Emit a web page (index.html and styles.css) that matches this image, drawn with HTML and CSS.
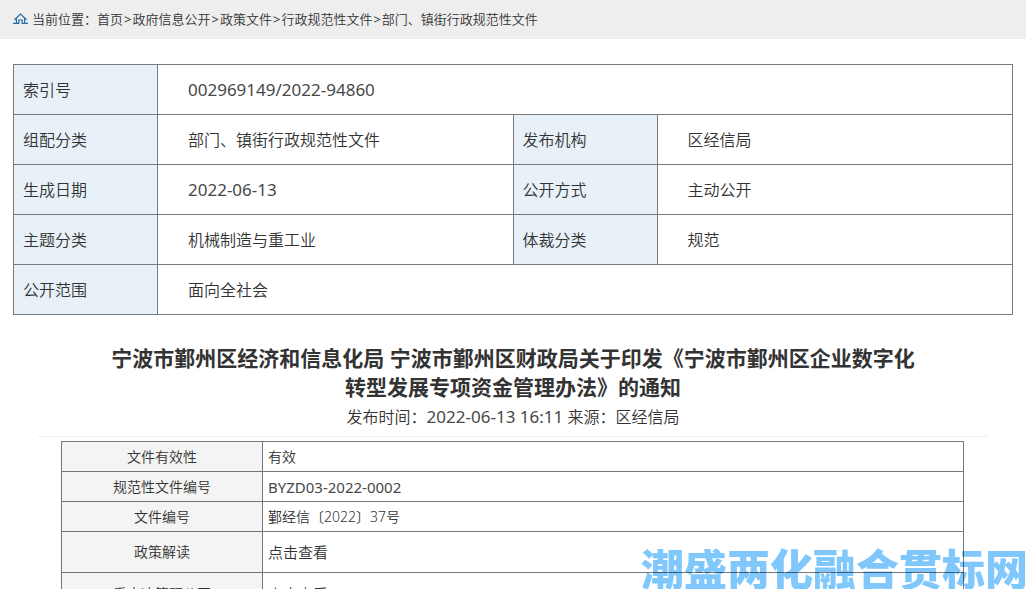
FILE: index.html
```html
<!DOCTYPE html>
<html lang="zh-CN">
<head>
<meta charset="utf-8">
<meta name="viewport" content="width=device-width, initial-scale=1">
<title>政府信息公开</title>
<link rel="stylesheet" href="styles.css">
</head>
<body>
<nav class="crumbs" aria-label="当前位置">
  <svg class="home" viewBox="0 0 15 11" aria-hidden="true"><path d="M1.5 6.8 7.5 1l6 5.8M0 10.4h5.8V7h3.4v3.4H15M3.4 5.5v4.9M11.6 5.5v4.9"/></svg>
  <span>当前位置：</span><a href="#">首页</a><span class="sep">&gt;</span><a href="#">政府信息公开</a><span class="sep">&gt;</span><a href="#">政策文件</a><span class="sep">&gt;</span><a href="#">行政规范性文件</a><span class="sep">&gt;</span><a href="#">部门、镇街行政规范性文件</a>
</nav>
<main class="page">
  <table class="index">
    <colgroup><col class="key"><col><col class="key"><col></colgroup>
    <tr><th scope="row">索引号</th><td class="num" colspan="3">002969149/2022-94860</td></tr>
    <tr><th scope="row">组配分类</th><td>部门、镇街行政规范性文件</td><th scope="row">发布机构</th><td>区经信局</td></tr>
    <tr><th scope="row">生成日期</th><td class="num">2022-06-13</td><th scope="row">公开方式</th><td>主动公开</td></tr>
    <tr><th scope="row">主题分类</th><td>机械制造与重工业</td><th scope="row">体裁分类</th><td>规范</td></tr>
    <tr><th scope="row">公开范围</th><td colspan="3">面向全社会</td></tr>
  </table>
  <article class="article">
    <header class="head">
      <h1>宁波市鄞州区经济和信息化局 宁波市鄞州区财政局关于印发《宁波市鄞州区企业数字化转型发展专项资金管理办法》的通知</h1>
      <p class="meta">发布时间：<time class="num">2022-06-13 16:11</time> 来源：区经信局</p>
    </header>
    <table class="detail">
      <colgroup><col class="label"><col></colgroup>
      <tr><th scope="row">文件有效性</th><td>有效</td></tr>
      <tr><th scope="row">规范性文件编号</th><td class="code">BYZD03-2022-0002</td></tr>
      <tr><th scope="row">文件编号</th><td>鄞经信〔2022〕37号</td></tr>
      <tr class="tall"><th scope="row">政策解读</th><td><a href="#">点击查看</a></td></tr>
      <tr class="taller"><th scope="row">重大决策预公开</th><td><a href="#">点击查看</a></td></tr>
    </table>
  </article>
</main>
<div class="watermark">潮盛两化融合贯标网</div>
</body>
</html>
```
FILE: styles.css
```css
* { box-sizing: border-box; }
html { height: 100%; overflow: hidden; }
body {
  margin: 0;
  height: 100%;
  overflow: hidden;
  background: #fff;
  color: #333;
  font: 350 16px/24px "Noto Sans", "Noto Sans CJK SC", sans-serif;
}
a { color: inherit; text-decoration: none; }
.crumbs {
  display: flex;
  align-items: center;
  height: 39px;
  padding: 0 13px 2px;
  background: #eee;
  font-size: 13px;
  white-space: nowrap;
}
.sep { padding: 0 1px; font-weight: 400; }
.home {
  width: 15px;
  height: 11px;
  margin-right: 4px;
  fill: none;
  stroke: #2a6ea6;
  stroke-width: 1.2;
}
.page { padding: 25px 13px 0; }
table { border-collapse: collapse; table-layout: fixed; }
th, td { font-weight: 350; }
.num, .code { color: #484848; font-weight: 400; }
.num { font-size: 17px; }
.index { width: 100%; }
.index .key { width: 144px; }
.index th, .index td { height: 50px; border: 1px solid #777b80; text-align: left; }
.index th { padding: 0 9px; background: #e8f1f8; }
.index td { padding: 0 30px; }
.article { padding: 29px 25px 0; }
.head { border-bottom: 1px solid #eee; text-align: center; }
h1 {
  max-width: 820px;
  margin: 0 auto;
  font-size: 21px;
  line-height: 29px;
  font-weight: 700;
}
.meta { margin: 0; padding: 3px 0 7px; }
.detail { width: calc(100% - 47px); margin: 4px auto 0 23px; font-size: 14px; }
.detail .label { width: 201px; }
.detail th, .detail td { height: 30px; padding: 0 5px; border: 1px solid #777; line-height: 20px; }
.detail th { background: #f4f4f4; text-align: center; }
.detail td { text-align: left; }
.detail .code { font-size: 15px; }
.detail .tall th, .detail .tall td { height: 41px; }
.detail .taller th, .detail .taller td { height: 43px; }
.detail a { font-size: 15px; }
.watermark {
  position: fixed;
  right: -2px;
  bottom: 0;
  color: #80c7fb;
  font: 900 43px/43px "Noto Sans CJK SC", sans-serif;
  white-space: nowrap;
  mix-blend-mode: multiply;
  pointer-events: none;
}
```
